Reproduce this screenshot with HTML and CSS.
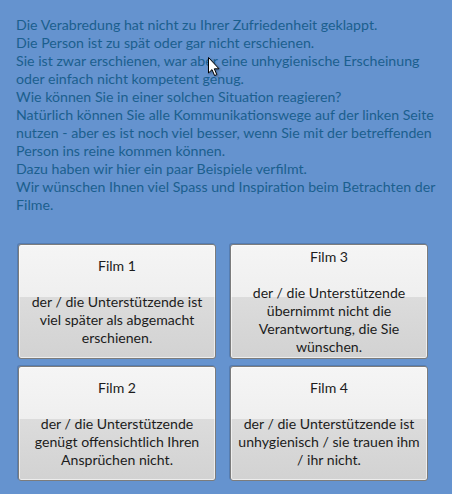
FILE: index.html
```html
<!DOCTYPE html>
<html lang="de">
<head>
<meta charset="utf-8">
<title>Filme</title>
<link rel="stylesheet" href="styles.css">
</head>
<body>
<div class="page">
  <div class="intro">
    <div class="line">Die Verabredung hat nicht zu Ihrer Zufriedenheit geklappt.</div>
    <div class="line">Die Person ist zu spät oder gar nicht erschienen.</div>
    <div class="line">Sie ist zwar erschienen, war aber eine unhygienische Erscheinung</div>
    <div class="line">oder einfach nicht kompetent genug.</div>
    <div class="line">Wie können Sie in einer solchen Situation reagieren?</div>
    <div class="line">Natürlich können Sie alle Kommunikationswege auf der linken Seite</div>
    <div class="line">nutzen - aber es ist noch viel besser, wenn Sie mit der betreffenden</div>
    <div class="line">Person ins reine kommen können.</div>
    <div class="line">Dazu haben wir hier ein paar Beispiele verfilmt.</div>
    <div class="line">Wir wünschen Ihnen viel Spass und Inspiration beim Betrachten der</div>
    <div class="line">Filme.</div>
  </div>
  <div class="films">
    <button class="film">Film 1<br><br>der / die Unterstützende ist<br>viel später als abgemacht<br>erschienen.</button>
    <button class="film">Film 3<br><br>der / die Unterstützende<br>übernimmt nicht die<br>Verantwortung, die Sie<br>wünschen.</button>
    <button class="film">Film 2<br><br>der / die Unterstützende<br>genügt offensichtlich Ihren<br>Ansprüchen nicht.</button>
    <button class="film">Film 4<br><br>der / die Unterstützende ist<br>unhygienisch / sie trauen ihm<br>/ ihr nicht.</button>
  </div>
  <svg class="cursor" width="14" height="22" viewBox="0 0 14 22">
    <path d="M1.5 1.5 L1.5 17 L5 13.6 L7.6 19.6 L9.8 18.6 L7.3 12.8 L12 12.8 Z" fill="#ffffff" stroke="#000000" stroke-width="1" stroke-linejoin="miter"/>
  </svg>
</div>
</body>
</html>
```
FILE: styles.css
```css
html, body {
  margin: 0;
  padding: 0;
}
body {
  background: #6593cf;
  width: 452px;
  height: 494px;
  overflow: hidden;
}
.page {
  position: relative;
  width: 452px;
  height: 494px;
  font-family: Lato, "Open Sans", sans-serif;
}
.intro {
  padding: 16px 0 0 16px;
  color: #1b5f8e;
  font-size: 14.2px;
  line-height: 18px;
}
.line {
  white-space: nowrap;
}
.films {
  display: grid;
  grid-template-columns: 198px 198px;
  grid-template-rows: 115px 115px;
  column-gap: 14px;
  row-gap: 7px;
  padding: 30px 0 0 18px;
}
.film {
  margin: 0;
  padding: 0;
  border: 1px solid #7c7c7c;
  border-radius: 3px;
  background: linear-gradient(to bottom, #f5f5f5 0%, #efefef 46%, #dcdcdc 46%, #d2d2d2 100%);
  box-shadow: -1px -1px 0 rgba(40, 60, 90, 0.25), inset 0 0 0 1px rgba(255, 255, 255, 0.6);
  font-family: Lato, "Open Sans", sans-serif;
  font-size: 14.1px;
  line-height: 18px;
  color: #1c1c1c;
  text-align: center;
  display: flex;
  align-items: center;
  justify-content: center;
  white-space: nowrap;
  cursor: default;
}
.cursor {
  position: absolute;
  left: 207px;
  top: 56px;
  filter: drop-shadow(1px 1px 1px rgba(0, 0, 0, 0.35));
}
```
